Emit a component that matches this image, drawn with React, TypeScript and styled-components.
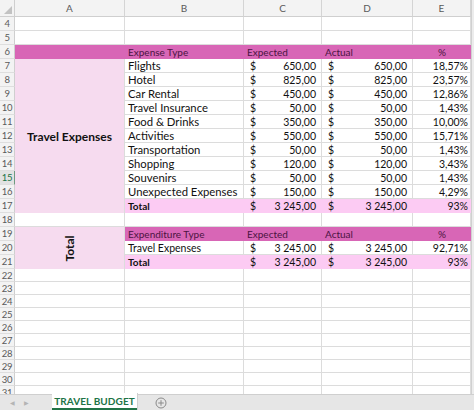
import React from "react";
import styled, { createGlobalStyle } from "styled-components";

const GlobalStyle = createGlobalStyle`
  html, body {
    margin: 0;
    padding: 0;
    background: #ffffff;
  }
  body {
    font-family: "Lato", "Liberation Sans", sans-serif;
  }
`;

const MAGENTA = "#d866b6";
const LIGHT = "#f6dbef";
const TOTAL = "#fccbf3";
const GRID = "#dcdcdc";

const Window = styled.div`
  width: 474px;
  height: 410px;
  display: flex;
  flex-direction: column;
  overflow: hidden;
  background: #fff;
`;

const SheetArea = styled.div`
  flex: 1;
  min-height: 0;
  overflow: hidden;
`;

const Sheet = styled.div`
  display: grid;
  grid-template-columns: 15px 110px 119px 78px 91px 58px 3px;
  grid-template-rows: 17px repeat(18, 14px) repeat(10, 13px);
`;

const Corner = styled.div`
  background: #f3f3f3;
  border-right: 1px solid #cfcfcf;
  border-bottom: 1px solid #cfcfcf;
  position: relative;
  &::after {
    content: "";
    position: absolute;
    right: 2px;
    bottom: 2px;
    border-left: 8px solid transparent;
    border-bottom: 8px solid #c2c2c2;
  }
`;

const ColHead = styled.div`
  background: #f3f3f3;
  border-right: 1px solid #d4d4d4;
  border-bottom: 1px solid #cfcfcf;
  display: flex;
  align-items: center;
  justify-content: center;
  font-size: 10px;
  color: #5a5a5a;
`;

const RowHead = styled.div<{ $active?: boolean }>`
  background: ${({ $active }) => ($active ? "#e2e2e2" : "#f3f3f3")};
  border-right: 1px solid ${({ $active }) => ($active ? "#6f9a80" : "#cfcfcf")};
  border-bottom: 1px solid #dedede;
  display: flex;
  align-items: center;
  justify-content: center;
  font-size: 9.5px;
  letter-spacing: -0.3px;
  color: ${({ $active }) => ($active ? "#217346" : "#5a5a5a")};
`;

const Cell = styled.div<{
  $fill?: string;
  $align?: "left" | "right" | "center";
  $bold?: boolean;
  $size?: number;
  $color?: string;
}>`
  background: ${({ $fill }) => $fill || "#fff"};
  border-right: 1px solid ${({ $fill }) => $fill || GRID};
  border-bottom: 1px solid ${({ $fill }) => $fill || GRID};
  display: flex;
  align-items: center;
  justify-content: ${({ $align }) =>
    $align === "right" ? "flex-end" : $align === "center" ? "center" : "flex-start"};
  padding: 0 2px 0 3px;
  font-size: ${({ $size }) => $size || 10.5}px;
  font-weight: ${({ $bold }) => ($bold ? 700 : 400)};
  color: ${({ $color }) => $color || "#111"};
  white-space: nowrap;
  min-width: 0;
`;

const Money = styled(Cell)`
  justify-content: space-between;
  padding: 0 5px 0 6px;
`;

const Edge = styled.div`
  background: #ececec;
  border-left: 1px solid #d0d0d0;
`;

const Merged = styled.div<{ $rows: number }>`
  grid-row: span ${({ $rows }) => $rows};
  background: ${LIGHT};
  border-right: 1px solid ${GRID};
  display: flex;
  align-items: center;
  justify-content: center;
  font-weight: 700;
  font-size: 12px;
  color: #111;
`;

const Vertical = styled.span`
  transform: rotate(-90deg);
  display: inline-block;
  font-size: 12px;
  font-weight: 700;
`;

const TabBar = styled.div`
  height: 15px;
  flex: none;
  background: #e6e6e6;
  border-top: 1px solid #cfcfcf;
  display: flex;
  align-items: stretch;
`;

const Nav = styled.div`
  width: 52px;
  display: flex;
  align-items: center;
  gap: 9px;
  padding-left: 10px;
  box-sizing: border-box;
  color: #b4b4b4;
  font-size: 6px;
`;

const Tab = styled.div`
  width: 85px;
  margin-top: -2px;
  background: #fff;
  border-bottom: 2px solid #217346;
  display: flex;
  align-items: center;
  justify-content: center;
  color: #217346;
  font-weight: 700;
  font-size: 10px;
  letter-spacing: 0.1px;
  box-shadow: 1px 0 0 #cfcfcf;
`;

const AddSheet = styled.div`
  margin-left: 18px;
  display: flex;
  align-items: center;
`;

type Item = {
  name: string;
  expected: string;
  actual: string;
  pct: string;
};

const items: Item[] = [
  { name: "Flights", expected: "650,00", actual: "650,00", pct: "18,57%" },
  { name: "Hotel", expected: "825,00", actual: "825,00", pct: "23,57%" },
  { name: "Car Rental", expected: "450,00", actual: "450,00", pct: "12,86%" },
  { name: "Travel Insurance", expected: "50,00", actual: "50,00", pct: "1,43%" },
  { name: "Food & Drinks", expected: "350,00", actual: "350,00", pct: "10,00%" },
  { name: "Activities", expected: "550,00", actual: "550,00", pct: "15,71%" },
  { name: "Transportation", expected: "50,00", actual: "50,00", pct: "1,43%" },
  { name: "Shopping", expected: "120,00", actual: "120,00", pct: "3,43%" },
  { name: "Souvenirs", expected: "50,00", actual: "50,00", pct: "1,43%" },
  { name: "Unexpected Expenses", expected: "150,00", actual: "150,00", pct: "4,29%" },
];

const HEAD_TEXT = "#4b1442";

function MoneyCell({ value, fill, size }: { value: string; fill?: string; size?: number }) {
  return (
    <Money $fill={fill} $size={size}>
      <span>$</span>
      <span>{value}</span>
    </Money>
  );
}

function HeaderCells({ first }: { first: string }) {
  return (
    <>
      <Cell $fill={MAGENTA} $color={HEAD_TEXT} $size={10}>{first}</Cell>
      <Cell $fill={MAGENTA} $color={HEAD_TEXT} $size={10}>Expected</Cell>
      <Cell $fill={MAGENTA} $color={HEAD_TEXT} $size={10}>Actual</Cell>
      <Cell $fill={MAGENTA} $color={HEAD_TEXT} $size={10} $align="center">%</Cell>
    </>
  );
}

function TotalCells() {
  return (
    <>
      <Cell $fill={TOTAL} $bold $size={10}>Total</Cell>
      <MoneyCell value="3 245,00" fill={TOTAL} />
      <MoneyCell value="3 245,00" fill={TOTAL} />
      <Cell $fill={TOTAL} $align="right">93%</Cell>
    </>
  );
}

function BlankRow({ n }: { n: number }) {
  return (
    <>
      <RowHead>{n}</RowHead>
      <Cell />
      <Cell />
      <Cell />
      <Cell />
      <Cell />
      <Edge />
    </>
  );
}

export default function App() {
  return (
    <Window>
      <GlobalStyle />
      <SheetArea>
        <Sheet>
          <Corner />
          {["A", "B", "C", "D", "E"].map((c) => (
            <ColHead key={c}>{c}</ColHead>
          ))}
          <Edge />

          <BlankRow n={4} />
          <BlankRow n={5} />

          <RowHead>6</RowHead>
          <Cell $fill={MAGENTA} />
          <HeaderCells first="Expense Type" />
          <Edge />

          {items.map((it, i) => (
            <React.Fragment key={it.name}>
              <RowHead $active={i + 7 === 15}>{i + 7}</RowHead>
              {i === 0 && <Merged $rows={11}>Travel Expenses</Merged>}
              <Cell $size={11.3}>{it.name}</Cell>
              <MoneyCell value={it.expected} />
              <MoneyCell value={it.actual} />
              <Cell $align="right">{it.pct}</Cell>
              <Edge />
            </React.Fragment>
          ))}

          <RowHead>17</RowHead>
          <TotalCells />
          <Edge />

          <BlankRow n={18} />

          <RowHead>19</RowHead>
          <Merged $rows={3}>
            <Vertical>Total</Vertical>
          </Merged>
          <HeaderCells first="Expenditure Type" />
          <Edge />

          <RowHead>20</RowHead>
          <Cell>Travel Expenses</Cell>
          <MoneyCell value="3 245,00" />
          <MoneyCell value="3 245,00" />
          <Cell $align="right">92,71%</Cell>
          <Edge />

          <RowHead>21</RowHead>
          <TotalCells />
          <Edge />

          {Array.from({ length: 10 }, (_, i) => (
            <BlankRow key={i} n={22 + i} />
          ))}
        </Sheet>
      </SheetArea>
      <TabBar>
        <Nav>
          <span>◀</span>
          <span>▶</span>
        </Nav>
        <Tab>TRAVEL BUDGET</Tab>
        <AddSheet>
          <svg width="12" height="12" viewBox="0 0 12 12">
            <circle cx="6" cy="6" r="5" fill="none" stroke="#8a8a8a" strokeWidth="1" />
            <path d="M6 3.2v5.6M3.2 6h5.6" stroke="#8a8a8a" strokeWidth="1" />
          </svg>
        </AddSheet>
      </TabBar>
    </Window>
  );
}
